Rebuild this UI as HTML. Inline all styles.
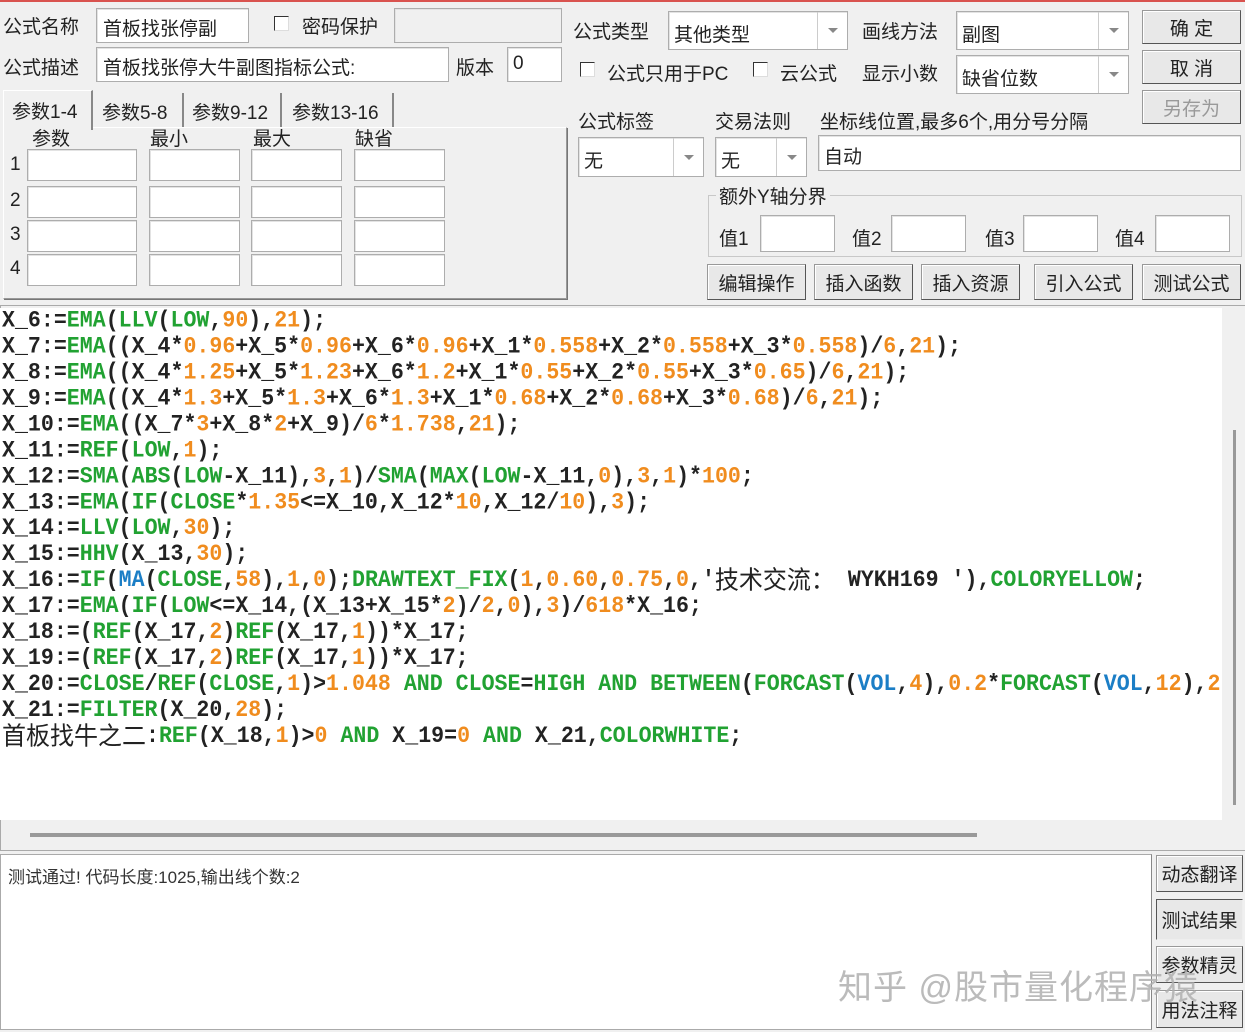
<!DOCTYPE html>
<html><head><meta charset="utf-8"><style>
*{box-sizing:border-box;margin:0;padding:0}
body{width:1245px;height:1032px;background:#f0f0f0;position:relative;overflow:hidden;font-family:"Liberation Sans","Noto Sans CJK SC",sans-serif;font-size:19px;color:#222}
.a{position:absolute;white-space:nowrap}
.in{position:absolute;background:#fff;border:1px solid #adadad;box-shadow:inset 1px 1px 0 #e3e3e3}
.dis{background:#f0f0f0}
.cb{position:absolute;width:15px;height:15px;background:#fff;border:1px solid #333;border-right-color:#ddd;border-bottom-color:#ddd}
.btn{position:absolute;background:#e8e8e8;border:1px solid #999;border-right-color:#555;border-bottom-color:#555;box-shadow:inset 1px 1px 0 #fff;text-align:center;font-size:19px;display:flex;align-items:center;justify-content:center;color:#222}
.dd{position:absolute;right:0;top:0;bottom:0;width:30px;border-left:1px solid #ccc;display:flex;align-items:center;justify-content:center}
.dd:after{content:"";border-left:5px solid transparent;border-right:5px solid transparent;border-top:5px solid #888}
#code{position:absolute;left:0;top:308px;width:1222px;height:512px;background:#fff;font-family:"Liberation Mono","Noto Sans CJK SC",monospace;font-weight:bold;font-size:21.6px;line-height:26px;color:#222;padding-left:2px;overflow:hidden}
#code div{white-space:pre;height:26px;transform:scaleY(1.05);transform-origin:left}
.g{color:#21a232}.o{color:#f08c1e}.b{color:#1b7ec6}
.cj{font-family:"Noto Sans CJK SC",sans-serif;font-weight:normal;font-size:24px;line-height:20px;display:inline-block;vertical-align:top;height:26px}
</style></head><body>
<div class="a" style="left:0;top:0;width:1245px;height:2px;background:#d9534f"></div>

<div class="a" style="left:3px;top:12px">公式名称</div>
<div class="in" style="left:96px;top:8px;width:153px;height:35px"><span class="a" style="left:6px;top:5px">首板找张停副</span></div>
<div class="cb" style="left:274px;top:16px"></div>
<div class="a" style="left:302px;top:12px">密码保护</div>
<div class="in dis" style="left:394px;top:8px;width:168px;height:35px"></div>
<div class="a" style="left:3px;top:53px">公式描述</div>
<div class="in" style="left:96px;top:47px;width:353px;height:35px"><span class="a" style="left:6px;top:5px">首板找张停大牛副图指标公式:</span></div>
<div class="a" style="left:456px;top:53px">版本</div>
<div class="in" style="left:507px;top:47px;width:55px;height:35px"><span class="a" style="left:5px;top:5px">0</span></div>

<div class="a" style="left:3px;top:127px;width:564px;height:172px;border:1px solid #999;border-top-color:#fff;border-left-color:#fff;box-shadow:1px 1px 0 #777"></div>
<div class="a" style="left:3px;top:90px;width:90px;height:40px;background:#f0f0f0;border:1px solid #fff;border-bottom:none;border-right:2px solid #888"><span class="a" style="left:8px;top:6px">参数1-4</span></div>
<div class="a" style="left:96px;top:93px;width:88px;height:34px;border-right:2px solid #888"><span class="a" style="left:6px;top:5px">参数5-8</span></div>
<div class="a" style="left:187px;top:93px;width:95px;height:34px;border-right:2px solid #888"><span class="a" style="left:5px;top:5px">参数9-12</span></div>
<div class="a" style="left:284px;top:93px;width:110px;height:34px;border-right:2px solid #888"><span class="a" style="left:8px;top:5px">参数13-16</span></div>
<div class="a" style="left:32px;top:124px">参数</div>
<div class="a" style="left:150px;top:124px">最小</div>
<div class="a" style="left:253px;top:124px">最大</div>
<div class="a" style="left:355px;top:124px">缺省</div>
<div class="a" style="left:10px;top:154px">1</div><div class="a" style="left:10px;top:190px">2</div><div class="a" style="left:10px;top:224px">3</div><div class="a" style="left:10px;top:258px">4</div>
<div class="in" style="left:27px;top:149px;width:110px;height:32px"></div><div class="in" style="left:149px;top:149px;width:91px;height:32px"></div><div class="in" style="left:251px;top:149px;width:91px;height:32px"></div><div class="in" style="left:354px;top:149px;width:91px;height:32px"></div>
<div class="in" style="left:27px;top:186px;width:110px;height:32px"></div><div class="in" style="left:149px;top:186px;width:91px;height:32px"></div><div class="in" style="left:251px;top:186px;width:91px;height:32px"></div><div class="in" style="left:354px;top:186px;width:91px;height:32px"></div>
<div class="in" style="left:27px;top:220px;width:110px;height:32px"></div><div class="in" style="left:149px;top:220px;width:91px;height:32px"></div><div class="in" style="left:251px;top:220px;width:91px;height:32px"></div><div class="in" style="left:354px;top:220px;width:91px;height:32px"></div>
<div class="in" style="left:27px;top:254px;width:110px;height:32px"></div><div class="in" style="left:149px;top:254px;width:91px;height:32px"></div><div class="in" style="left:251px;top:254px;width:91px;height:32px"></div><div class="in" style="left:354px;top:254px;width:91px;height:32px"></div>

<div class="a" style="left:573px;top:17px">公式类型</div>
<div class="in" style="left:668px;top:11px;width:180px;height:39px"><span class="a" style="left:5px;top:8px">其他类型</span><div class="dd"></div></div>
<div class="a" style="left:862px;top:17px">画线方法</div>
<div class="in" style="left:956px;top:11px;width:173px;height:39px"><span class="a" style="left:5px;top:8px">副图</span><div class="dd"></div></div>
<div class="cb" style="left:580px;top:62px"></div>
<div class="a" style="left:607px;top:59px">公式只用于PC</div>
<div class="cb" style="left:753px;top:62px"></div>
<div class="a" style="left:780px;top:59px">云公式</div>
<div class="a" style="left:862px;top:59px">显示小数</div>
<div class="in" style="left:956px;top:55px;width:173px;height:39px"><span class="a" style="left:5px;top:8px">缺省位数</span><div class="dd"></div></div>
<div class="btn" style="left:1142px;top:10px;width:99px;height:34px">确&nbsp;定</div>
<div class="btn" style="left:1142px;top:50px;width:99px;height:34px">取&nbsp;消</div>
<div class="btn" style="left:1142px;top:90px;width:99px;height:34px;color:#999">另存为</div>

<div class="a" style="left:578px;top:107px">公式标签</div>
<div class="a" style="left:715px;top:107px">交易法则</div>
<div class="a" style="left:820px;top:107px">坐标线位置,最多6个,用分号分隔</div>
<div class="in" style="left:578px;top:137px;width:126px;height:40px"><span class="a" style="left:5px;top:8px">无</span><div class="dd"></div></div>
<div class="in" style="left:715px;top:137px;width:92px;height:40px"><span class="a" style="left:5px;top:8px">无</span><div class="dd"></div></div>
<div class="in" style="left:818px;top:135px;width:423px;height:36px"><span class="a" style="left:5px;top:6px">自动</span></div>
<div class="a" style="left:708px;top:195px;width:534px;height:62px;border:1px solid #c8c8c8"></div>
<div class="a" style="left:716px;top:182px;background:#f0f0f0;padding:0 3px">额外Y轴分界</div>
<div class="a" style="left:719px;top:224px">值1</div><div class="in" style="left:760px;top:215px;width:75px;height:37px"></div>
<div class="a" style="left:852px;top:224px">值2</div><div class="in" style="left:891px;top:215px;width:75px;height:37px"></div>
<div class="a" style="left:985px;top:224px">值3</div><div class="in" style="left:1023px;top:215px;width:75px;height:37px"></div>
<div class="a" style="left:1115px;top:224px">值4</div><div class="in" style="left:1155px;top:215px;width:75px;height:37px"></div>
<div class="btn" style="left:707px;top:264px;width:99px;height:36px">编辑操作</div>
<div class="btn" style="left:814px;top:264px;width:99px;height:36px">插入函数</div>
<div class="btn" style="left:921px;top:264px;width:99px;height:36px">插入资源</div>
<div class="btn" style="left:1034px;top:264px;width:99px;height:36px">引入公式</div>
<div class="btn" style="left:1142px;top:264px;width:99px;height:36px">测试公式</div>

<div class="a" style="left:0;top:305px;width:1245px;height:546px;border:1px solid #aaa;border-right:none"></div>
<div id="code">
<div>X_6:=<span class="g">EMA</span>(<span class="g">LLV</span>(<span class="g">LOW</span>,<span class="o">90</span>),<span class="o">21</span>);</div>
<div>X_7:=<span class="g">EMA</span>((X_4*<span class="o">0.96</span>+X_5*<span class="o">0.96</span>+X_6*<span class="o">0.96</span>+X_1*<span class="o">0.558</span>+X_2*<span class="o">0.558</span>+X_3*<span class="o">0.558</span>)/<span class="o">6</span>,<span class="o">21</span>);</div>
<div>X_8:=<span class="g">EMA</span>((X_4*<span class="o">1.25</span>+X_5*<span class="o">1.23</span>+X_6*<span class="o">1.2</span>+X_1*<span class="o">0.55</span>+X_2*<span class="o">0.55</span>+X_3*<span class="o">0.65</span>)/<span class="o">6</span>,<span class="o">21</span>);</div>
<div>X_9:=<span class="g">EMA</span>((X_4*<span class="o">1.3</span>+X_5*<span class="o">1.3</span>+X_6*<span class="o">1.3</span>+X_1*<span class="o">0.68</span>+X_2*<span class="o">0.68</span>+X_3*<span class="o">0.68</span>)/<span class="o">6</span>,<span class="o">21</span>);</div>
<div>X_10:=<span class="g">EMA</span>((X_7*<span class="o">3</span>+X_8*<span class="o">2</span>+X_9)/<span class="o">6</span>*<span class="o">1.738</span>,<span class="o">21</span>);</div>
<div>X_11:=<span class="g">REF</span>(<span class="g">LOW</span>,<span class="o">1</span>);</div>
<div>X_12:=<span class="g">SMA</span>(<span class="g">ABS</span>(<span class="g">LOW</span>-X_11),<span class="o">3</span>,<span class="o">1</span>)/<span class="g">SMA</span>(<span class="g">MAX</span>(<span class="g">LOW</span>-X_11,<span class="o">0</span>),<span class="o">3</span>,<span class="o">1</span>)*<span class="o">100</span>;</div>
<div>X_13:=<span class="g">EMA</span>(<span class="g">IF</span>(<span class="g">CLOSE</span>*<span class="o">1.35</span>&lt;=X_10,X_12*<span class="o">10</span>,X_12/<span class="o">10</span>),<span class="o">3</span>);</div>
<div>X_14:=<span class="g">LLV</span>(<span class="g">LOW</span>,<span class="o">30</span>);</div>
<div>X_15:=<span class="g">HHV</span>(X_13,<span class="o">30</span>);</div>
<div>X_16:=<span class="g">IF</span>(<span class="b">MA</span>(<span class="g">CLOSE</span>,<span class="o">58</span>),<span class="o">1</span>,<span class="o">0</span>);<span class="g">DRAWTEXT_FIX</span>(<span class="o">1</span>,<span class="o">0.60</span>,<span class="o">0.75</span>,<span class="o">0</span>,'<span class="cj">技术交流：</span> WYKH169 '),<span class="g">COLORYELLOW</span>;</div>
<div>X_17:=<span class="g">EMA</span>(<span class="g">IF</span>(<span class="g">LOW</span>&lt;=X_14,(X_13+X_15*<span class="o">2</span>)/<span class="o">2</span>,<span class="o">0</span>),<span class="o">3</span>)/<span class="o">618</span>*X_16;</div>
<div>X_18:=(<span class="g">REF</span>(X_17,<span class="o">2</span>)<span class="g">REF</span>(X_17,<span class="o">1</span>))*X_17;</div>
<div>X_19:=(<span class="g">REF</span>(X_17,<span class="o">2</span>)<span class="g">REF</span>(X_17,<span class="o">1</span>))*X_17;</div>
<div>X_20:=<span class="g">CLOSE</span>/<span class="g">REF</span>(<span class="g">CLOSE</span>,<span class="o">1</span>)&gt;<span class="o">1.048</span> <span class="g">AND</span> <span class="g">CLOSE</span>=<span class="g">HIGH</span> <span class="g">AND</span> <span class="g">BETWEEN</span>(<span class="g">FORCAST</span>(<span class="b">VOL</span>,<span class="o">4</span>),<span class="o">0.2</span>*<span class="g">FORCAST</span>(<span class="b">VOL</span>,<span class="o">12</span>),<span class="o">2</span></div>
<div>X_21:=<span class="g">FILTER</span>(X_20,<span class="o">28</span>);</div>
<div><span class="cj">首板找牛之二</span>:<span class="g">REF</span>(X_18,<span class="o">1</span>)&gt;<span class="o">0</span> <span class="g">AND</span> X_19=<span class="o">0</span> <span class="g">AND</span> X_21,<span class="g">COLORWHITE</span>;</div>
</div>
<div class="a" style="left:1233px;top:430px;width:3px;height:375px;background:#999"></div>
<div class="a" style="left:30px;top:833px;width:947px;height:4px;background:#999"></div>

<div class="a" style="left:0;top:854px;width:1152px;height:176px;background:#fff;border:1px solid #aaa;border-right-color:#888"></div>
<div class="a" style="left:8px;top:863px;font-size:17px;color:#333">测试通过! 代码长度:1025,输出线个数:2</div>
<div class="btn" style="left:1156px;top:855px;width:87px;height:37px">动态翻译</div>
<div class="btn" style="left:1156px;top:899px;width:87px;height:41px;border-color:#555 #eee #eee #555;box-shadow:none">测试结果</div>
<div class="btn" style="left:1156px;top:946px;width:87px;height:37px">参数精灵</div>
<div class="btn" style="left:1156px;top:990px;width:87px;height:38px">用法注释</div>
<div class="a" style="left:838px;top:960px;font-size:34px;color:rgba(175,175,175,0.85);letter-spacing:1px">知乎 @股市量化程序猿</div>
</body></html>
